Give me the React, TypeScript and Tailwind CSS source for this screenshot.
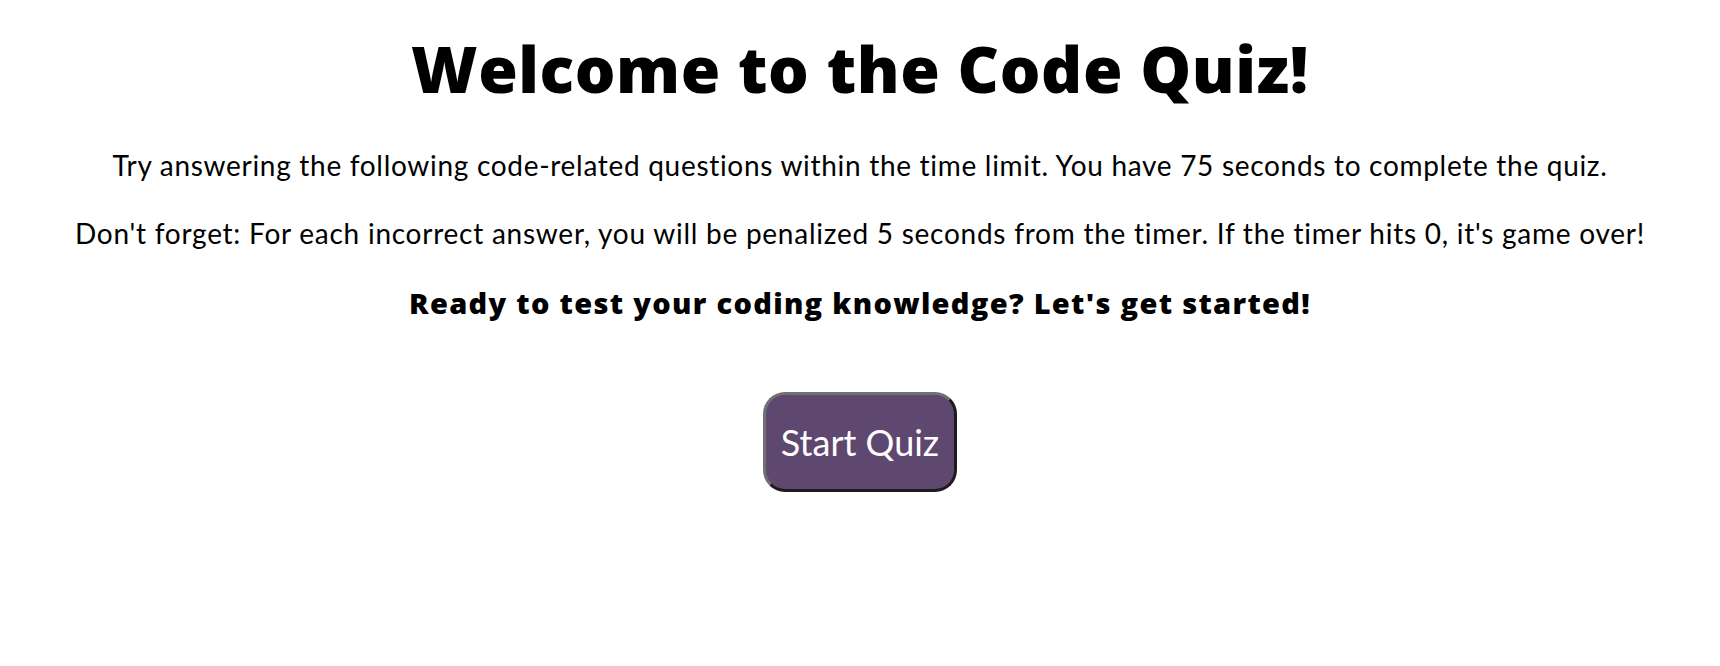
const App = () => {
  return (
    <div className="min-h-screen bg-white text-black font-['Lato','Open_Sans',sans-serif]">
      <main className="flex flex-col items-center text-center">
        <h1 className="mt-[37px] text-[64px] leading-none font-extrabold font-['Open_Sans',sans-serif] tracking-[0.6px]">
          Welcome to the Code Quiz!
        </h1>

        <p className="mt-[50px] text-[28px] leading-none tracking-[0.7px]">
          Try answering the following code-related questions within the time
          limit. You have 75 seconds to complete the quiz.
        </p>
        <p className="mt-[40px] text-[28px] leading-none tracking-[0.75px]">
          Don't forget: For each incorrect answer, you will be penalized 5
          seconds from the timer. If the timer hits 0, it's game over!
        </p>
        <p className="mt-[41px] text-[29px] leading-none font-extrabold font-['Open_Sans',sans-serif] tracking-[1.3px]">
          Ready to test your coding knowledge? Let's get started!
        </p>

        <button
          type="button"
          className="mt-[75px] h-[100px] w-[194px] rounded-[22px] border-[3px] border-t-[#707070] border-l-[#707070] border-b-[#1c1c1c] border-r-[#1c1c1c] bg-[#5f4870] text-[36px] text-white cursor-pointer"
        >
          Start Quiz
        </button>
      </main>
    </div>
  );
};

export default App;
